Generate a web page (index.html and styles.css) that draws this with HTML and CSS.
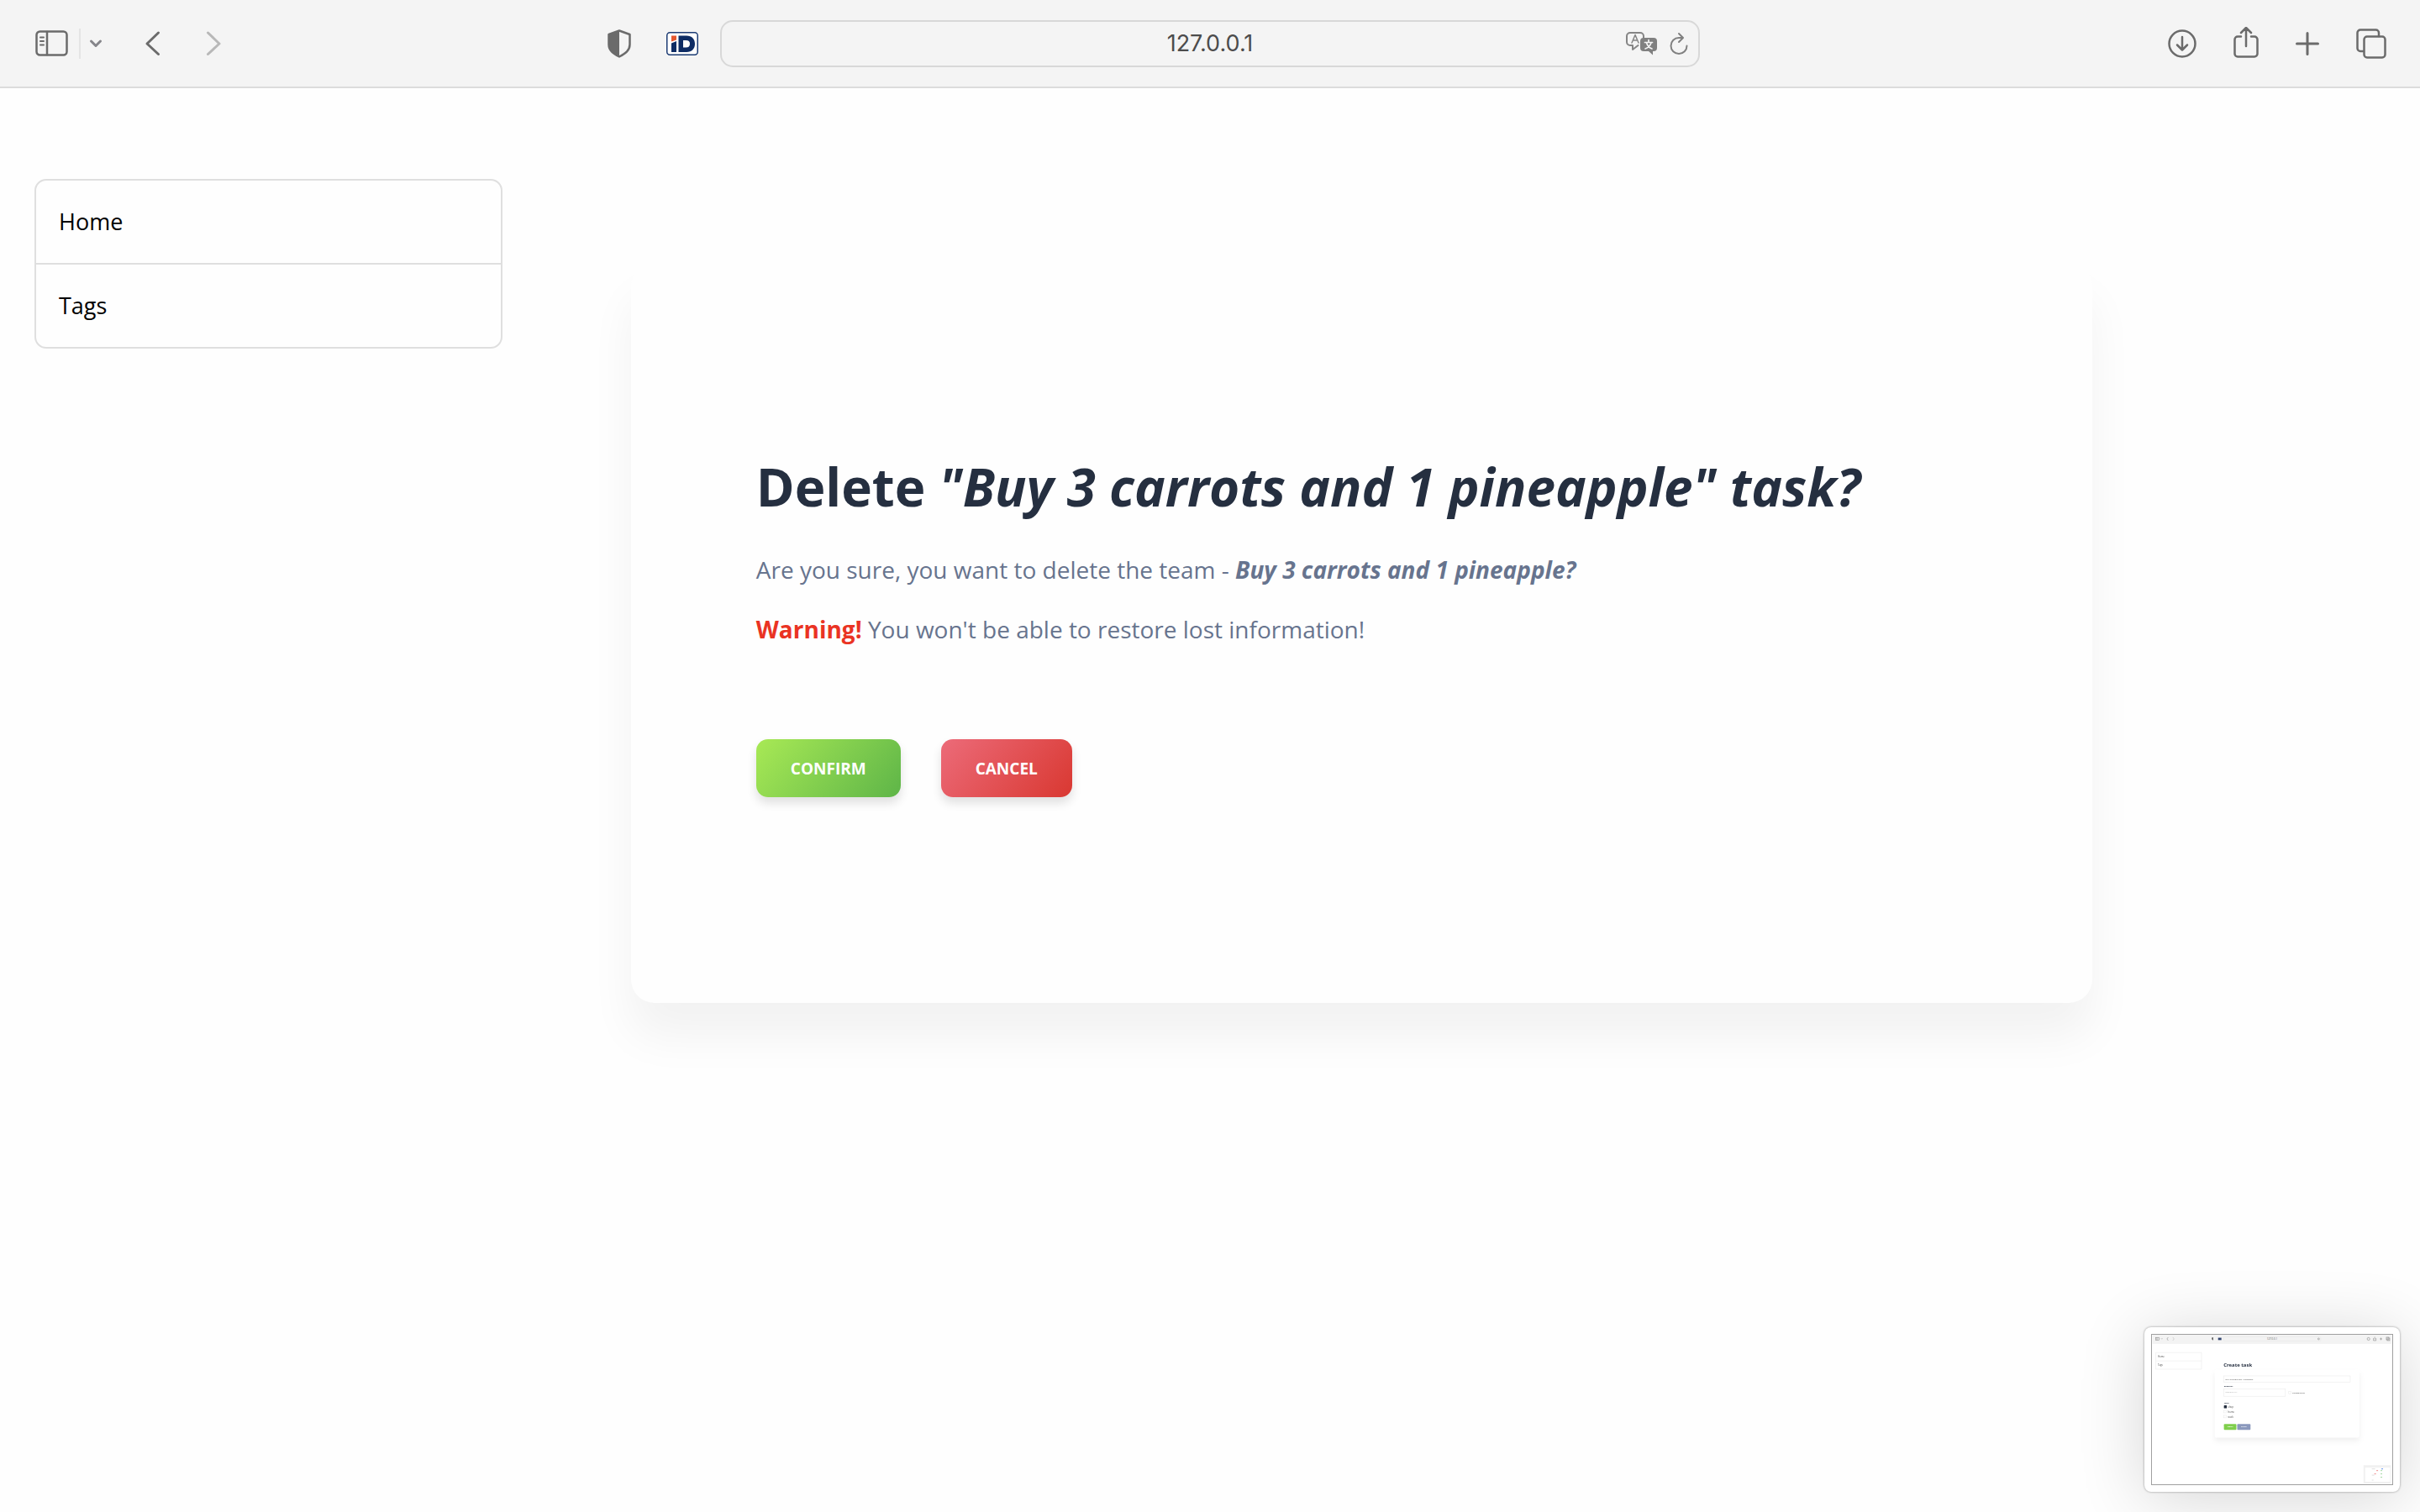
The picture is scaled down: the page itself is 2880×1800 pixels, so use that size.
FILE: index.html
```html
<!DOCTYPE html>
<html lang="en">
<head>
<meta charset="utf-8">
<meta name="viewport" content="width=device-width, initial-scale=1">
<title>Delete task</title>
<link rel="stylesheet" href="styles.css">
</head>
<body>
<header class="toolbar">
  <div class="toolbar-side">
    <button class="icon-button sidebar-toggle" type="button" aria-label="Show sidebar">
      <svg width="40" height="32" viewBox="0 0 40 32" fill="none" stroke="#6b6b6b" stroke-width="2.5" stroke-linecap="round"><rect x="1.5" y="1.5" width="36" height="28" rx="4"/><path d="M14 2v27"/><path d="M6 8.5h4M6 13h4M6 17.5h4" stroke-width="2"/></svg>
    </button>
    <span class="separator"></span>
    <button class="icon-button tab-menu" type="button" aria-label="Tab groups">
      <svg width="16" height="12" viewBox="0 0 16 12" fill="none" stroke="#85858a" stroke-width="3" stroke-linecap="round" stroke-linejoin="round"><path d="M2.5 3 8 8.5 13.5 3"/></svg>
    </button>
    <button class="icon-button back" type="button" aria-label="Back">
      <svg width="20" height="32" viewBox="0 0 20 32" fill="none" stroke="#6b6b6b" stroke-width="3" stroke-linecap="round" stroke-linejoin="round"><path d="M16.500 3 3 16l13.500 12.500"/></svg>
    </button>
    <button class="icon-button forward" type="button" aria-label="Forward">
      <svg width="20" height="32" viewBox="0 0 20 32" fill="none" stroke="#b8b8b8" stroke-width="3" stroke-linecap="round" stroke-linejoin="round"><path d="M3.500 3 17 16 3.500 28.500"/></svg>
    </button>
    <div class="extensions">
      <button class="icon-button" type="button" aria-label="Privacy report">
        <svg width="28" height="34" viewBox="0 0 28 34"><path d="M14 1.500 26.500 6v12c0 7-5 10.500-12.500 14.500C6.500 28.500 1.500 25 1.500 18V6z" fill="none" stroke="#6b6b6b" stroke-width="2.500" stroke-linejoin="round"/><path d="M14 1v32C6 29 1 25.500 1 18V6z" fill="#6b6b6b"/></svg>
      </button>
      <button class="icon-button" type="button" aria-label="iD extension">
        <svg width="38" height="28" viewBox="0 0 38 28"><rect x=".75" y=".75" width="36.500" height="26.500" rx="3.500" fill="#fff" stroke="#1d3c74" stroke-width="1.500"/><path d="M6 4.500h6v5L6 11.500z" fill="#e4572e"/><path d="M6 13.500l6-2.500v13H6z" fill="#0e2c64"/><path fill-rule="evenodd" d="M14.500 4.500H24c6.500 0 10 4 10 9.700S30.500 24 24 24h-9.500zM20 10v8.500h3.500c3 0 4.500-1.500 4.500-4.300S26.500 10 23.500 10z" fill="#0e2c64"/></svg>
      </button>
    </div>
  </div>
  <div class="address">
    <input class="address-input" type="text" value="127.0.0.1" aria-label="Address">
    <div class="address-actions">
      <button class="icon-button" type="button" aria-label="Translate">
        <svg width="38" height="28" viewBox="0 0 38 28" fill="none" stroke-linecap="round" stroke-linejoin="round"><path d="M14.500 16 8 21v-5H5a4 4 0 0 1-4-4V5a4 4 0 0 1 4-4h12a4 4 0 0 1 4 4v3" stroke="#858585" stroke-width="2"/><path d="M7 13 11 3.500 15 13M8.500 10h5" stroke="#858585" stroke-width="1.500"/><path d="M21 7h12a4 4 0 0 1 4 4v8a4 4 0 0 1-4 4h-1v4.500L27 23h-6a4 4 0 0 1-4-4v-8a4 4 0 0 1 4-4z" fill="#808080"/><path d="M27 9.500V12M22.500 12.500h9M30 13c-1 3-4 6-7 7M24.500 13c1 3 3.500 6 6.500 7" stroke="#f4f4f4" stroke-width="1.700"/></svg>
      </button>
      <button class="icon-button" type="button" aria-label="Reload">
        <svg width="22" height="28" viewBox="0 0 22 28" fill="none" stroke="#808080" stroke-width="2" stroke-linecap="round" stroke-linejoin="round"><path d="M15.500 7H11a9.500 9.500 0 1 0 9.500 9.500M11 2l5 5-5 5"/></svg>
      </button>
    </div>
  </div>
  <div class="toolbar-end">
    <button class="icon-button" type="button" aria-label="Downloads">
      <svg width="34" height="40" viewBox="0 1 34 40" fill="none" stroke="#6b6b6b" stroke-width="2.500" stroke-linecap="round" stroke-linejoin="round"><circle cx="17" cy="21" r="15.500"/><path d="M17 13v15M11 22.500l6 6 6-6"/></svg>
    </button>
    <button class="icon-button" type="button" aria-label="Share">
      <svg width="30" height="40" viewBox="0 1 30 40" fill="none" stroke="#6b6b6b" stroke-width="2.500" stroke-linecap="round" stroke-linejoin="round"><path d="M15 24V2.500M9 8l6-6 6 6M9 12.500H5a3.500 3.500 0 0 0-3.500 3.500v17A3.500 3.500 0 0 0 5 36.500h20a3.500 3.500 0 0 0 3.500-3.500V16a3.500 3.500 0 0 0-3.500-3.500h-4"/></svg>
    </button>
    <button class="icon-button" type="button" aria-label="New tab">
      <svg width="28" height="28" viewBox="0 0 28 28" fill="none" stroke="#6b6b6b" stroke-width="3" stroke-linecap="round"><path d="M14 1.500v25M1.500 14h25"/></svg>
    </button>
    <button class="icon-button" type="button" aria-label="Tab overview">
      <svg width="36" height="36" viewBox="0 0 36 36" fill="none" stroke="#6b6b6b" stroke-width="2.500" stroke-linecap="round"><rect x="9.500" y="9.500" width="25" height="25" rx="3.500"/><path d="M9 27H5a3.500 3.500 0 0 1-3.500-3.500V5A3.500 3.500 0 0 1 5 1.500h18.500A3.500 3.500 0 0 1 27 5v4"/></svg>
    </button>
  </div>
</header>

<div class="layout">
  <nav class="sidebar">
    <ul class="menu">
      <li class="menu-item"><a class="menu-link" href="#home">Home</a></li>
      <li class="menu-item"><a class="menu-link" href="#tags">Tags</a></li>
    </ul>
  </nav>
  <main class="content">
    <section class="card">
      <h1 class="title">Delete <em>"Buy 3 carrots and 1 pineapple" task?</em></h1>
      <p class="text">Are you sure, you want to delete the team - <strong><em>Buy 3 carrots and 1 pineapple?</em></strong></p>
      <p class="text"><strong class="warning">Warning!</strong> You won't be able to restore lost information!</p>
      <form class="actions">
        <button class="button button-confirm" type="submit">Confirm</button>
        <button class="button button-cancel" type="button">Cancel</button>
      </form>
    </section>
  </main>
</div>

<aside class="preview" aria-label="Screenshot preview">
  <svg class="preview-image" viewBox="0 0 288 180" font-family="Open Sans, sans-serif">
    <rect width="288" height="180" fill="#fff"/>
    <rect width="288" height="11" fill="#f3f3f3"/>
    <g fill="none" stroke="#888" stroke-width=".6"><rect x="4" y="3.300" width="4" height="3"/><path d="M5.500 3.300v3M10.500 4.500l.7.700.7-.7M19 3l-1.500 2 1.500 2"/><path d="M24.500 3 26 5l-1.500 2" stroke="#bbb"/><circle cx="260" cy="5" r="1.600"/><path d="M266 4v3h3V4M267.500 5.500V2.500M273.500 5h3M275 3.500v3"/><rect x="281.500" y="3" width="3" height="3"/><rect x="282.500" y="4" width="3" height="3"/><circle cx="200" cy="5" r="1"/></g>
    <path d="M73 3v3.500c-1-.4-1.500-1-1.500-2V3.500z" fill="#444"/><rect x="79" y="3.600" width="4" height="2.800" fill="#34466f"/>
    <rect x="85.500" y="2.500" width="117" height="5" rx="1" fill="none" stroke="#e2e2e2" stroke-width=".4"/>
    <text x="144" y="6.200" font-size="3" text-anchor="middle" fill="#555">127.0.0.1</text>
    <rect class="preview-card" x="75" y="42" width="174" height="82" rx="3" fill="#fff"/>
    <g fill="#fff" stroke="#e6e6e6" stroke-width=".5"><path d="M4 21.500h55v20H4zM4 31.500h55"/><rect x="86" y="49.500" width="152" height="7.500"/><rect x="86" y="65" width="74" height="9"/><rect x="164" y="68" width="3" height="3"/><rect x="86" y="91" width="3" height="3"/><rect x="86" y="97" width="3" height="3"/></g>
    <g font-size="2.800" fill="#444"><text x="6.500" y="27.500">Home</text><text x="6.500" y="37.500">Tags</text><text x="88" y="54.300" font-size="2.400">Buy 3 carrots and 1 pineapple</text><text x="88" y="70" font-size="2.400" fill="#aaa">mm/dd/yyyy</text><text x="168" y="71" font-size="2.400">Is completed?</text><text x="91" y="88">shop</text><text x="91" y="94">home</text><text x="91" y="100">work</text></g>
    <g font-weight="700" fill="#252f40"><text x="85.500" y="38" font-size="6">Create task</text><text x="86" y="63" font-size="2.200">Deadline*</text><text x="86" y="82.800" font-size="2.200">Tags*</text></g>
    <rect x="86" y="85" width="3.500" height="3.500" rx=".6" fill="#252f40"/>
    <rect x="86" y="107.500" width="15" height="7" rx="1" fill="#7fcf4c"/><rect x="102" y="107.500" width="16" height="7" rx="1" fill="#8b99bd"/>
    <g font-size="1.800" font-weight="700" fill="#fff" text-anchor="middle"><text x="93.500" y="111.700">SUBMIT</text><text x="110" y="111.700">CANCEL</text></g>
    <rect x="254" y="157" width="33" height="22" fill="#f1f1f1"/><rect x="256" y="160" width="30" height="17" fill="#fff"/>
    <g><path d="M264 161.500h4M264 169h3M264 175h2" stroke="#bbb" stroke-width=".5"/><path d="M275.500 161.500h2" stroke="#5b8def"/><path d="M269.500 163.500h2M267 167.500h2" stroke="#e88"/><path d="M274.500 163.500h2M274.500 167.500h2M274.500 171.500h2" stroke="#8c8" stroke-width=".8"/></g>
  </svg>
</aside>
</body>
</html>
```
FILE: styles.css
```css
* {
  box-sizing: border-box;
}

body {
  margin: 0;
  min-height: 100vh;
  background: #fefefe;
  color: #67748e;
  font-family: "Open Sans", sans-serif;
  font-size: 28px;
  line-height: 44px;
}

em {
  font-style: oblique 20deg;
}

/* Browser toolbar */

.toolbar {
  display: grid;
  grid-template-columns: 1fr minmax(0, 1166px) 1fr;
  align-items: center;
  height: 105px;
  padding: 0 40px;
  border-bottom: 2px solid #dcdcdc;
  background: #f4f4f4;
}

.toolbar-side,
.toolbar-end,
.extensions,
.address-actions {
  display: flex;
  align-items: center;
}

.toolbar-end {
  justify-content: flex-end;
  gap: 44px;
}

.extensions {
  gap: 42px;
  margin: 0 26px 0 auto;
}

.icon-button {
  display: flex;
  padding: 0;
  border: 0;
  background: none;
}

.sidebar-toggle {
  margin-left: 2px;
}

.separator {
  width: 2px;
  height: 36px;
  margin: 0 10px 0 12px;
  background: #e4e4e4;
}

.back {
  margin-left: 50px;
}

.forward {
  margin-left: 52px;
}

.address {
  position: relative;
}

.address-input {
  display: block;
  width: 100%;
  height: 56px;
  border: 2px solid #d8d8d8;
  border-radius: 15px;
  background: #f4f4f4;
  color: #4c4c4c;
  font: 27px Inter, sans-serif;
  text-align: center;
}

.address-actions {
  position: absolute;
  top: 0;
  right: 14px;
  height: 100%;
  gap: 14px;
}

/* Page layout */

.layout {
  display: grid;
  grid-template-columns: 21% 1fr;
  padding-top: 108px;
}

.sidebar {
  padding: 0 7px 0 41px;
}

.menu {
  margin: 0;
  padding: 0;
  border: 2px solid #dfdfdf;
  border-radius: 14px;
  font-size: 27px;
  list-style: none;
}

.menu-item + .menu-item {
  border-top: 2px solid #dfdfdf;
}

.menu-link {
  display: block;
  padding: 27px;
  color: #000;
  text-decoration: none;
}

.content {
  padding: 100px 390px 0 146px;
}

.card {
  padding: 223px 149px 245px;
  border-radius: 28px;
  background: #fefefe;
  box-shadow: 0 40px 54px rgba(0, 0, 0, 0.05);
}

.title {
  margin: 0 0 34px;
  color: #252f40;
  font-size: 62px;
  font-weight: 700;
  line-height: 86px;
}

.text {
  margin: 0 0 27px;
}

.warning {
  color: #ea3323;
}

.actions {
  display: flex;
  gap: 48px;
  margin-top: 109px;
}

.button {
  height: 69px;
  padding: 0 41px;
  border: 0;
  border-radius: 14px;
  box-shadow: 0 7px 12px rgba(0, 0, 0, 0.12);
  color: #fff;
  font: 700 19px/28px "Open Sans", sans-serif;
  text-transform: uppercase;
}

.button-confirm {
  background: linear-gradient(310deg, #5eb548, #a8e955);
}

.button-cancel {
  background: linear-gradient(310deg, #d93831, #ec6b79);
}

/* Floating screenshot preview */

.preview {
  position: fixed;
  right: 24px;
  bottom: 24px;
  padding: 8px;
  border-radius: 8px;
  background: #fff;
  box-shadow: 0 0 3px rgba(0, 0, 0, 0.4), 0 8px 80px rgba(0, 0, 0, 0.16);
}

.preview-image {
  display: block;
  width: 288px;
  height: 180px;
  border: 1px solid #a0a0a0;
}

.preview-card {
  filter: drop-shadow(0 4px 3px rgba(0, 0, 0, 0.06));
}
```
